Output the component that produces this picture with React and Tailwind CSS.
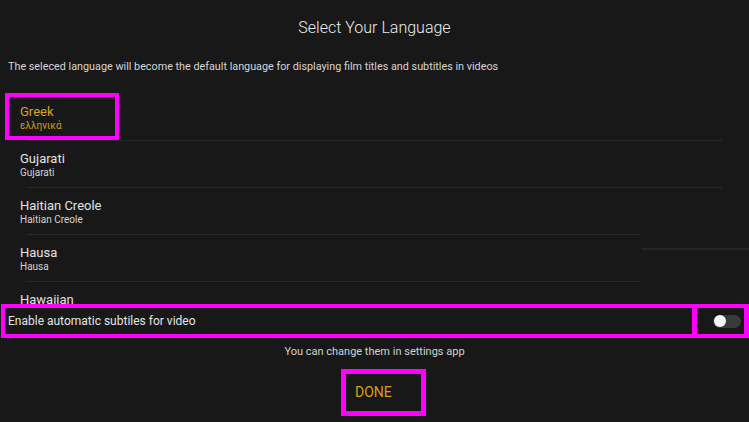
import React from "react";

const items = [
  { name: "Gujarati", sub: "Gujarati", line: "w-[695px]" },
  { name: "Haitian Creole", sub: "Haitian Creole", line: "w-[614px]" },
  { name: "Hausa", sub: "Hausa", line: "w-[614px]" },
  { name: "Hawaiian", sub: null, line: "w-[614px]" },
];

export default function App() {
  return (
    <div
      className="w-[749px] h-[422px] bg-[#181818] flex flex-col overflow-hidden"
      style={{ fontFamily: "Roboto, 'Liberation Sans', sans-serif" }}
    >
      <div className="h-[56px] flex items-center justify-center text-[16px] font-light text-[#ececec]">
        Select Your Language
      </div>
      <div className="h-[22px] flex items-center pl-[8px] text-[10.8px] text-[#d6d6d6]">
        The seleced language will become the default language for displaying film titles and subtitles in videos
      </div>
      <div className="relative mt-[15px] h-[211px] overflow-hidden flex flex-col">
        <div className="flex flex-col">
          <div className="ml-[5px] w-[114px] h-[47px] border-4 border-[#ff00ff] pl-[11px] pt-[7px] flex flex-col">
            <div className="text-[13px] leading-[15px] text-[#dca21e]">Greek</div>
            <div className="text-[10px] leading-[13px] text-[#d19a1c]">ελληνικά</div>
          </div>
          <div className="ml-[27px] w-[695px] h-px bg-[#2b2b2b]" />
        </div>
        {items.map((it) => (
          <div key={it.name} className="flex flex-col">
            <div className="h-[46px] pl-[20px] pt-[10px] flex flex-col">
              <div className="text-[13px] leading-[15px] text-[#e2e2e2]">{it.name}</div>
              {it.sub && (
                <div className="text-[10px] leading-[13px] text-[#d4d4d4]">{it.sub}</div>
              )}
            </div>
            <div className={`ml-[27px] ${it.line} h-px bg-[#2b2b2b]`} />
          </div>
        ))}
        <div className="absolute left-[641px] top-[155px] w-[108px] h-[2px] bg-[#262626]" />
      </div>
      <div className="h-[34px] flex ml-[1px]">
        <div className="w-[696px] h-full border-4 border-r-[5px] border-[#ff00ff] flex items-center pl-[3px] text-[12px] text-[#e4e4e4]">
          Enable automatic subtiles for video
        </div>
        <div className="w-[52px] h-full border-4 border-l-0 border-r-[5px] border-[#ff00ff] flex items-center pl-[16px]">
          <div className="w-[28px] h-[13px] rounded-full bg-[#3a3a3a] flex items-center pl-[1px]">
            <div className="w-[12px] h-[12px] rounded-full bg-[#f7f7f7]" />
          </div>
        </div>
      </div>
      <div className="h-[28px] flex items-center justify-center text-[11px] text-[#d2d2d2]">
        You can change them in settings app
      </div>
      <div className="mt-[3px] ml-[341px] w-[85px] h-[47px] border-[5px] border-[#ff00ff] flex items-center pl-[9px] text-[14px] text-[#d99d1c]">
        DONE
      </div>
    </div>
  );
}
